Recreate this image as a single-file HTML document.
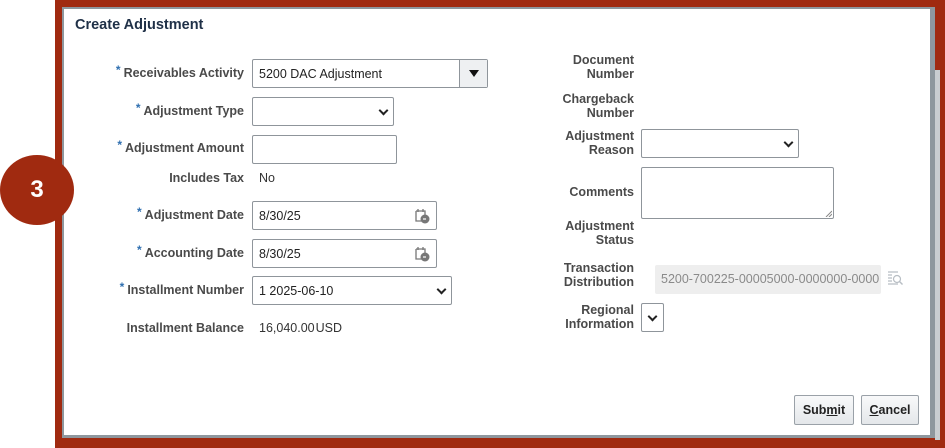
<!DOCTYPE html>
<html><head><meta charset="utf-8"><style>
*{box-sizing:border-box;margin:0;padding:0}
body{width:945px;height:448px;position:relative;background:#fff;font-family:"Liberation Sans",Arial,sans-serif;overflow:hidden}
.a{position:absolute}
.red{background:#a02a10}
.lbl{position:absolute;font-weight:bold;font-size:12.5px;color:#4a4a4a;text-align:right;line-height:14px;white-space:nowrap}
.l1{right:701px}
.l2{right:311px}
.star{color:#2f6fb0;font-size:12px;position:relative;top:-3px;margin-right:3px}
.box{position:absolute;border:1px solid #8f959b;border-radius:2px;background:#fff;font-size:12.5px;color:#222;padding-left:6px;display:flex;align-items:center}
.val{position:absolute;font-size:12.5px;color:#333}
.chev{position:absolute;right:6px;top:50%;margin-top:-5px;width:7px;height:7px;border-right:2px solid #222;border-bottom:2px solid #222;transform:rotate(45deg)}
.btn{position:absolute;border:1px solid #9aa1a8;background:linear-gradient(#f8f9fa,#e4e7ea);font-weight:bold;font-size:12.5px;color:#222;display:flex;align-items:center;justify-content:center;border-radius:2px}
</style></head><body>
<div class="a red" style="left:55px;top:0;width:890px;height:448px"></div>
<div class="a" style="left:935px;top:70px;width:5px;height:370px;background:#c9cdd1"></div>
<div class="a" style="left:62px;top:7px;width:873px;height:431px;background:#8e979e"></div>
<div class="a" style="left:64px;top:9px;width:866px;height:426px;background:#fff"></div>
<div class="a" style="left:0;top:155px;width:74px;height:70px;border-radius:50%;background:#a02a10;color:#fff;font-weight:bold;font-size:24px;display:flex;align-items:center;justify-content:center">3</div>
<div class="a" style="left:75px;top:17px;font-weight:bold;font-size:14.5px;color:#1f3047">Create Adjustment</div>

<div class="lbl l1" style="top:66px"><span class="star">*</span>Receivables Activity</div>
<div class="box" style="left:252px;top:59px;width:236px;height:29px">5200 DAC Adjustment
<div class="a" style="right:0;top:0;width:28px;height:27px;border-left:1px solid #8f959b;background:#eef0f2"><div class="a" style="left:9px;top:10px;width:0;height:0;border-left:5px solid transparent;border-right:5px solid transparent;border-top:7px solid #111"></div></div></div>

<div class="lbl l1" style="top:104px"><span class="star">*</span>Adjustment Type</div>
<div class="box" style="left:252px;top:97px;width:142px;height:29px"><div class="chev"></div></div>

<div class="lbl l1" style="top:141px"><span class="star">*</span>Adjustment Amount</div>
<div class="box" style="left:252px;top:135px;width:145px;height:29px"></div>

<div class="lbl l1" style="top:171px">Includes Tax</div>
<div class="val" style="left:259px;top:171px">No</div>

<div class="lbl l1" style="top:208px"><span class="star">*</span>Adjustment Date</div>
<div class="box" style="left:252px;top:201px;width:185px;height:29px">8/30/25
<svg class="a" style="right:6px;top:6px" width="16" height="16" viewBox="0 0 16 16"><path d="M2 3h9v7M2 3v10h6M4 1v3M9 1v3" stroke="#777" fill="none" stroke-width="1.3"/><circle cx="11" cy="11" r="4.5" fill="#777"/><path d="M9 11h3" stroke="#fff" stroke-width="1.2"/></svg></div>

<div class="lbl l1" style="top:246px"><span class="star">*</span>Accounting Date</div>
<div class="box" style="left:252px;top:239px;width:185px;height:29px">8/30/25
<svg class="a" style="right:6px;top:6px" width="16" height="16" viewBox="0 0 16 16"><path d="M2 3h9v7M2 3v10h6M4 1v3M9 1v3" stroke="#777" fill="none" stroke-width="1.3"/><circle cx="11" cy="11" r="4.5" fill="#777"/><path d="M9 11h3" stroke="#fff" stroke-width="1.2"/></svg></div>

<div class="lbl l1" style="top:283px"><span class="star">*</span>Installment Number</div>
<div class="box" style="left:252px;top:276px;width:200px;height:29px">1 2025-06-10<div class="chev"></div></div>

<div class="lbl l1" style="top:321px">Installment Balance</div>
<div class="val" style="left:259px;top:321px">16,040.00&#8202;USD</div>

<div class="lbl l2" style="top:53px">Document<br>Number</div>
<div class="lbl l2" style="top:92px">Chargeback<br>Number</div>
<div class="lbl l2" style="top:129px">Adjustment<br>Reason</div>
<div class="box" style="left:641px;top:129px;width:158px;height:29px"><div class="chev"></div></div>
<div class="lbl l2" style="top:185px">Comments</div>
<div class="box" style="left:641px;top:167px;width:193px;height:52px"><svg class="a" style="right:1px;bottom:1px" width="7" height="7"><path d="M1 7L7 1M4 7L7 4" stroke="#888"/></svg></div>
<div class="lbl l2" style="top:219px">Adjustment<br>Status</div>
<div class="lbl l2" style="top:261px">Transaction<br>Distribution</div>
<div class="a" style="left:655px;top:265px;width:226px;height:29px;background:#eeeeee;border-radius:2px;font-size:12.5px;color:#8a8a8a;padding-left:6px;line-height:29px;overflow:hidden;white-space:nowrap">5200-700225-00005000-0000000-0000</div>
<svg class="a" style="left:887px;top:270px" width="17" height="17" viewBox="0 0 17 17"><path d="M1 2h10M1 5h4M1 8h4M1 11h4M1 14h10" stroke="#b8bec4" stroke-width="1.2"/><circle cx="10" cy="9" r="3.5" fill="none" stroke="#b8bec4" stroke-width="1.2"/><path d="M12.5 11.5l3 3" stroke="#b8bec4" stroke-width="1.4"/></svg>
<div class="lbl l2" style="top:303px">Regional<br>Information</div>
<div class="box" style="left:641px;top:303px;width:23px;height:29px"><div class="chev" style="right:7px"></div></div>

<div class="btn" style="left:794px;top:395px;width:60px;height:30px">Sub<u>m</u>it</div>
<div class="btn" style="left:861px;top:395px;width:58px;height:30px"><u>C</u>ancel</div>
</body></html>
